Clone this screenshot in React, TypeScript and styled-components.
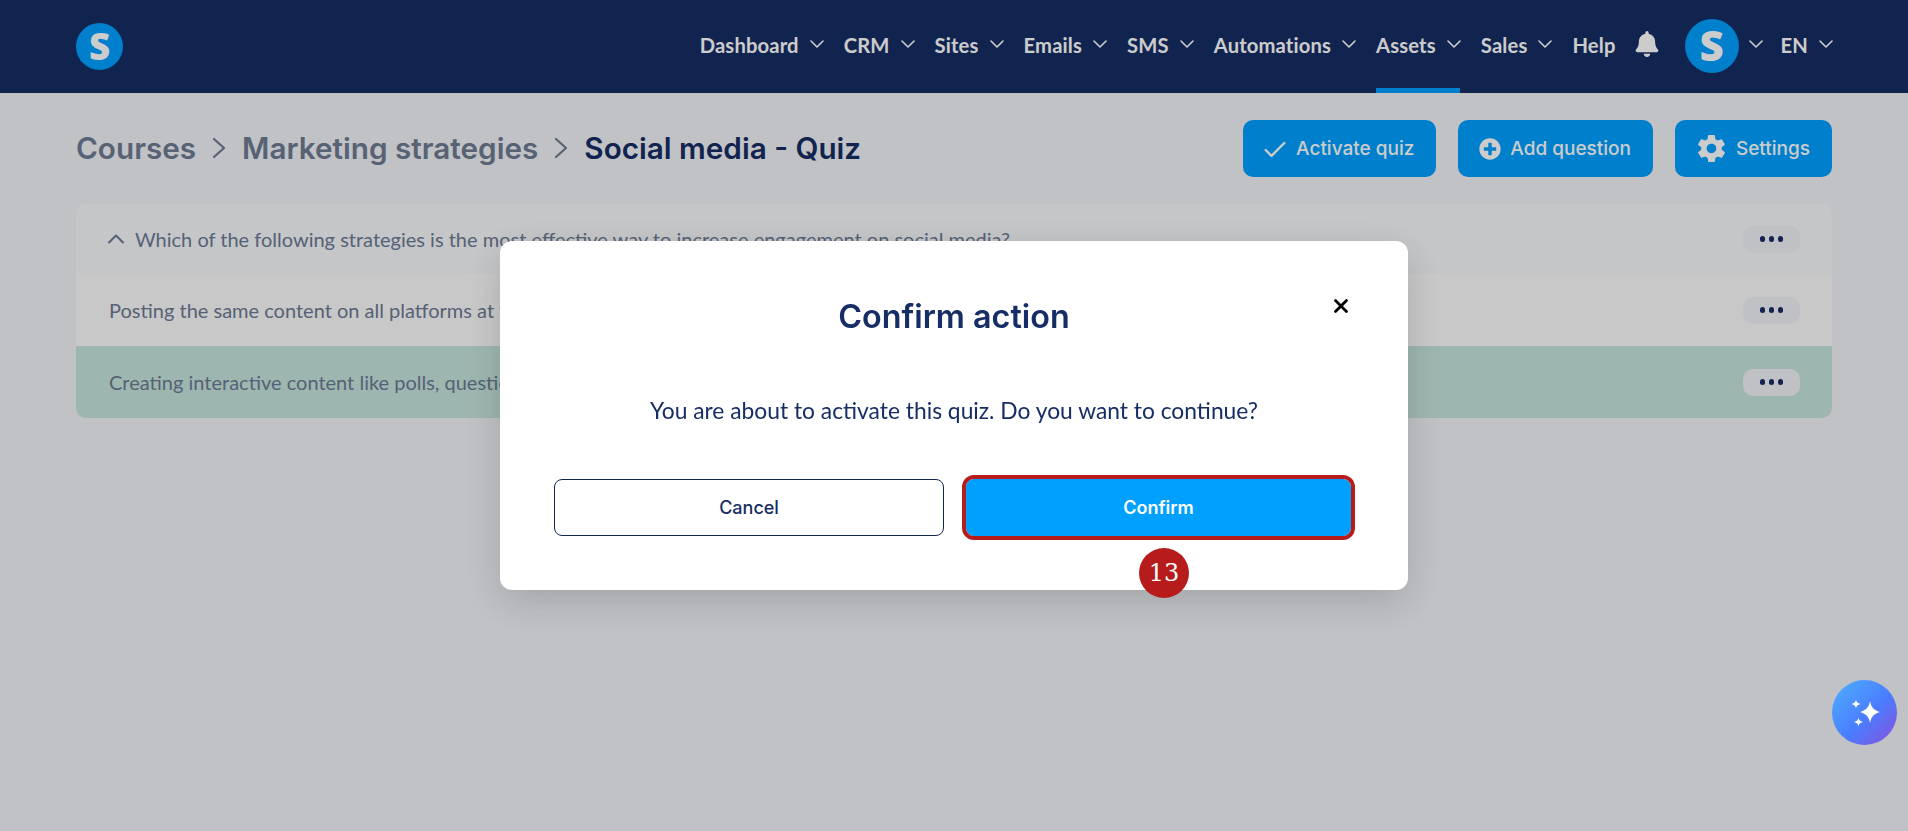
import styled, { createGlobalStyle } from "styled-components";
import { Check, ChevronDown, ChevronUp, X } from "lucide-react";
import { FaBell, FaPlusCircle } from "react-icons/fa";
import { IoMdSettings } from "react-icons/io";

const GlobalStyle = createGlobalStyle`
	html, body {
		margin: 0;
		padding: 0;
		height: 100%;
		background: #f1f3f7;
		font-family: "Lato", "Noto Sans", sans-serif;
	}
	* {
		box-sizing: border-box;
	}
`;

const Header = styled.header`
	display: flex;
	align-items: center;
	justify-content: space-between;
	height: 93px;
	padding: 0 76px;
	background: #162d65;
`;

const Logo = styled.div<{ $size: number }>`
	display: flex;
	align-items: center;
	justify-content: center;
	width: ${(p) => p.$size}px;
	height: ${(p) => p.$size}px;
	border-radius: 50%;
	background: #00a0ff;
	color: #fff;
	font-family: "Open Sans", sans-serif;
	font-weight: 800;
	font-size: ${(p) => p.$size * 0.78}px;
	line-height: 1;
`;

const Nav = styled.nav`
	display: flex;
	align-items: center;
	height: 100%;
	gap: 21px;
`;

const NavItem = styled.div<{ $active?: boolean }>`
	position: relative;
	display: flex;
	align-items: center;
	height: 100%;
	gap: 6px;
	padding-bottom: 3px;
	color: #fff;
	font-weight: 700;
	font-size: 20.2px;
	letter-spacing: 0.15px;

	&::after {
		content: "";
		display: ${(p) => (p.$active ? "block" : "none")};
		position: absolute;
		left: 0;
		right: 0;
		bottom: 0;
		height: 5px;
		background: #00a0ff;
	}
`;

const NavChevron = styled(ChevronDown)`
	margin-right: -6px;
	margin-top: -3px;
`;

const BellButton = styled.div`
	display: flex;
	color: #fff;
	font-size: 26px;
	margin: 0 0 5px -3px;
`;

const AvatarItem = styled.div`
	display: flex;
	align-items: center;
	gap: 5px;
	margin: 0 -2px 2px 4px;
	color: #fff;
`;

const Page = styled.main`
	display: flex;
	flex-direction: column;
	gap: 27px;
	padding: 27px 76px 0;
`;

const TitleRow = styled.div`
	display: flex;
	align-items: center;
	justify-content: space-between;
`;

const Breadcrumb = styled.div`
	display: flex;
	align-items: center;
	gap: 16px;
	padding-bottom: 2px;
	font-family: "Inter", sans-serif;
	font-weight: 600;
	font-size: 29.7px;
	color: #162d65;
`;

const Crumb = styled.span<{ $muted?: boolean }>`
	color: ${(p) => (p.$muted ? "#6d7b92" : "#162d65")};
`;

const Actions = styled.div`
	display: flex;
	gap: 22px;
`;

const ActionButton = styled.button`
	display: flex;
	align-items: center;
	gap: 11px;
	height: 57px;
	padding: 0 22px 0 21px;
	border: none;
	border-radius: 10px;
	background: #00a0ff;
	color: #fff;
	font-family: "Inter", sans-serif;
	font-weight: 500;
	font-size: 19px;
`;

const CheckIcon = styled(Check)`
	margin: 0 -4px -2px -3px;
`;

const PlusIcon = styled(FaPlusCircle)`
	margin-right: -2px;
`;

const GearIcon = styled(IoMdSettings)`
	margin: 0 -3px 0 -1px;
`;

const QuestionCard = styled.section`
	display: flex;
	flex-direction: column;
	border-radius: 10px;
	overflow: hidden;
`;

const Row = styled.div<{ $kind: "head" | "plain" | "correct" }>`
	display: flex;
	align-items: center;
	justify-content: space-between;
	height: ${(p) => (p.$kind === "head" ? 70 : 72)}px;
	padding: 0 32px 0 33px;
	color: #6b7a94;
	font-size: 20px;
	background: ${(p) =>
		p.$kind === "head" ? "#f6f8fa" : p.$kind === "plain" ? "#fbfbfb" : "#c6e4dd"};
`;

const RowLabel = styled.div`
	display: flex;
	align-items: center;
	gap: 5px;
`;

const RowChevron = styled(ChevronUp)`
	margin-left: -7px;
`;

const DotsButton = styled.div`
	display: flex;
	align-items: center;
	justify-content: center;
	gap: 3.5px;
	width: 57px;
	height: 27px;
	border-radius: 10px;
	background: #f0f2f6;
`;

const Dot = styled.span`
	width: 5.5px;
	height: 5.5px;
	border-radius: 50%;
	background: #162d65;
`;

const Overlay = styled.div`
	position: fixed;
	inset: 0;
	display: flex;
	align-items: center;
	justify-content: center;
	background: rgba(0, 0, 0, 0.2);
`;

const Modal = styled.div`
	position: relative;
	display: flex;
	flex-direction: column;
	align-items: center;
	width: 908px;
	height: 349px;
	padding: 57px 54px 54px;
	border-radius: 12px;
	background: #fff;
	box-shadow: 0 12px 40px rgba(0, 0, 0, 0.16);
`;

const ModalTitle = styled.h2`
	margin: 0;
	font-family: "Inter", sans-serif;
	font-weight: 600;
	font-size: 32.3px;
	line-height: 38px;
	color: #162d65;
`;

const CloseButton = styled.div`
	position: absolute;
	top: 54px;
	right: 56px;
	display: flex;
	color: #000;
`;

const ModalText = styled.p`
	margin: 60px 0 0;
	font-size: 22.8px;
	line-height: 28px;
	color: #162d65;
`;

const ModalButtons = styled.div`
	display: grid;
	grid-template-columns: 390px 385px;
	justify-content: start;
	align-items: center;
	gap: 22px;
	width: 100%;
	margin-top: 55px;
`;

const ModalButton = styled.button<{ $primary?: boolean }>`
	position: relative;
	height: 57px;
	border: ${(p) => (p.$primary ? "none" : "1px solid #122451")};
	border-radius: 8px;
	background: ${(p) => (p.$primary ? "#00a0ff" : "#fff")};
	color: ${(p) => (p.$primary ? "#fff" : "#162d65")};
	font-family: "Inter", sans-serif;
	font-weight: ${(p) => (p.$primary ? 600 : 450)};
	font-size: 18px;
	outline: ${(p) => (p.$primary ? "4px solid #b71c1c" : "none")};
`;

const StepBadge = styled.span`
	position: absolute;
	left: 173px;
	top: 69px;
	display: flex;
	align-items: center;
	justify-content: center;
	width: 50px;
	height: 50px;
	border-radius: 50%;
	background: #b71c1c;
	color: #fff;
	font-family: "DejaVu Serif", serif;
	font-weight: 400;
	font-size: 24px;
`;

const ChatBubble = styled.div`
	position: fixed;
	left: 1832px;
	top: 680px;
	display: flex;
	align-items: center;
	justify-content: center;
	width: 65px;
	height: 65px;
	border-radius: 50%;
	background: linear-gradient(135deg, #4fb0ff 0%, #4a7dff 55%, #8a4fdc 100%);
`;

const navItems = ["Dashboard", "CRM", "Sites", "Emails", "SMS", "Automations", "Assets", "Sales"];

function CrumbArrow() {
	return (
		<svg width="14" height="22" viewBox="0 0 14 22" fill="none" stroke="#6d7b92" strokeWidth="2.2">
			<path d="M2 2 L12 11 L2 20" strokeLinecap="round" strokeLinejoin="round" />
		</svg>
	);
}

function Sparkle() {
	return (
		<svg width="40" height="40" viewBox="0 0 40 40" fill="#fff">
			<path d="M25 8 C26 14 28.5 17 35 19 C28.5 21 26 24 25 30 C24 24 21.5 21 15 19 C21.5 17 24 14 25 8 Z" />
			<path d="M11 6.5 C11.4 9 12.5 10.2 15.5 11 C12.5 11.8 11.4 13 11 15.5 C10.6 13 9.5 11.8 6.5 11 C9.5 10.2 10.6 9 11 6.5 Z" />
			<path d="M13.5 24.5 C13.9 27 15 28.2 18 29 C15 29.8 13.9 31 13.5 33.5 C13.1 31 12 29.8 9 29 C12 28.2 13.1 27 13.5 24.5 Z" />
		</svg>
	);
}

function Dots() {
	return (
		<DotsButton>
			<Dot />
			<Dot />
			<Dot />
		</DotsButton>
	);
}

export default function App() {
	return (
		<>
			<GlobalStyle />
			<Header>
				<Logo $size={47}>S</Logo>
				<Nav>
					{navItems.map((item) => (
						<NavItem key={item} $active={item === "Assets"}>
							{item}
							<NavChevron size={24} strokeWidth={1.6} />
						</NavItem>
					))}
					<NavItem>Help</NavItem>
					<BellButton>
						<FaBell />
					</BellButton>
					<AvatarItem>
						<Logo $size={54}>S</Logo>
						<NavChevron size={24} strokeWidth={1.6} />
					</AvatarItem>
					<NavItem>
						EN
						<NavChevron size={24} strokeWidth={1.6} />
					</NavItem>
				</Nav>
			</Header>
			<Page>
				<TitleRow>
					<Breadcrumb>
						<Crumb $muted>Courses</Crumb>
						<CrumbArrow />
						<Crumb $muted>Marketing strategies</Crumb>
						<CrumbArrow />
						<Crumb>Social media - Quiz</Crumb>
					</Breadcrumb>
					<Actions>
						<ActionButton>
							<CheckIcon size={28} strokeWidth={2} />
							Activate quiz
						</ActionButton>
						<ActionButton>
							<PlusIcon size={22} />
							Add question
						</ActionButton>
						<ActionButton>
							<GearIcon size={33} />
							Settings
						</ActionButton>
					</Actions>
				</TitleRow>
				<QuestionCard>
					<Row $kind="head">
						<RowLabel>
							<RowChevron size={28} strokeWidth={1.8} />
							Which of the following strategies is the most effective way to increase engagement on social media?
						</RowLabel>
						<Dots />
					</Row>
					<Row $kind="plain">
						<RowLabel>Posting the same content on all platforms at the same time</RowLabel>
						<Dots />
					</Row>
					<Row $kind="correct">
						<RowLabel>Creating interactive content like polls, questions and quizzes</RowLabel>
						<Dots />
					</Row>
				</QuestionCard>
			</Page>
			<Overlay>
				<Modal>
					<ModalTitle>Confirm action</ModalTitle>
					<CloseButton>
						<X size={22} strokeWidth={3} />
					</CloseButton>
					<ModalText>You are about to activate this quiz. Do you want to continue?</ModalText>
					<ModalButtons>
						<ModalButton>Cancel</ModalButton>
						<ModalButton $primary>
							Confirm
							<StepBadge>13</StepBadge>
						</ModalButton>
					</ModalButtons>
				</Modal>
			</Overlay>
			<ChatBubble>
				<Sparkle />
			</ChatBubble>
		</>
	);
}
